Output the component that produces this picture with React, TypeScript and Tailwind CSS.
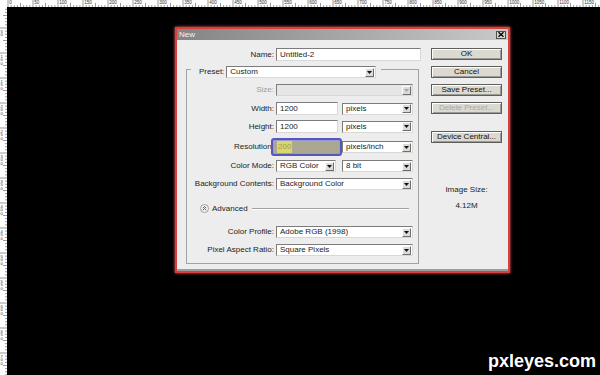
import React from "react";

function TopRuler() {
  const ticks = [];
  for (let i = 0; i * 3.125 < 593; i++) {
    const x = 1 + i * 3.125;
    const h = i % 8 === 0 ? 7 : i % 4 === 0 ? 4 : 2;
    ticks.push(<line key={i} x1={x} x2={x} y1={7 - h} y2={7} stroke="#555" strokeWidth="0.6" />);
  }
  const labels = [];
  for (let k = 0; 1 + k * 25 < 593; k++) {
    labels.push(
      <text key={k} x={2.2 + k * 25} y={4.2} fontSize="4.6" fill="#333">
        {k * 50}
      </text>
    );
  }
  return (
    <svg width="593" height="7" className="block bg-white">
      {ticks}
      {labels}
    </svg>
  );
}

function LeftRuler() {
  const ticks = [];
  for (let i = 0; -4 + i * 3.125 < 368; i++) {
    const y = -4 + i * 3.125;
    const w = i % 8 === 0 ? 7 : i % 4 === 0 ? 4 : 2;
    ticks.push(<line key={i} y1={y} y2={y} x1={7 - w} x2={7} stroke="#555" strokeWidth="0.6" />);
  }
  const labels = [];
  for (let k = 1; -4 + k * 25 < 368; k++) {
    const y = -4 + k * 25;
    const digits = String(k * 50).split("");
    labels.push(
      <text key={k} fontSize="4.2" fill="#333">
        {digits.map((d, j) => (
          <tspan key={j} x={0.6} y={y + 4.5 + j * 3.8}>
            {d}
          </tspan>
        ))}
      </text>
    );
  }
  return (
    <svg width="7" height="368" className="block bg-white">
      {ticks}
      {labels}
    </svg>
  );
}

function Arrow({ disabled }: { disabled?: boolean }) {
  return (
    <span className="mr-[1px] flex h-[9px] w-[9px] shrink-0 items-center justify-center border border-t-white border-l-white border-b-[#6e6e6e] border-r-[#6e6e6e] bg-[#dcdad3]">
      <svg width="5" height="3" viewBox="0 0 5 3">
        <path d="M0 0h5L2.5 3z" fill={disabled ? "#a8a8a8" : "#111"} />
      </svg>
    </span>
  );
}

function Select({ value, w, disabled }: { value?: string; w: string; disabled?: boolean }) {
  return (
    <div
      className={`${w} flex h-[12px] shrink-0 items-center justify-between border border-t-[#7c7c7c] border-l-[#7c7c7c] border-b-[#d8d8d8] border-r-[#d8d8d8] ${
        disabled ? "bg-[#e6e6e6]" : "bg-white"
      }`}
    >
      <span className="pl-[3px] leading-none">{value}</span>
      <Arrow disabled={disabled} />
    </div>
  );
}

function Input({ value, w }: { value: string; w: string }) {
  return (
    <div className={`${w} flex h-[13px] shrink-0 items-center border border-t-[#7c7c7c] border-l-[#7c7c7c] border-b-[#d8d8d8] border-r-[#d8d8d8] bg-white`}>
      <span className="pl-[3px] leading-none">{value}</span>
    </div>
  );
}

function Btn({ label, disabled, className }: { label: string; disabled?: boolean; className?: string }) {
  return (
    <div
      className={`flex h-[12px] w-[71px] items-center justify-center border border-[#5e5e5e] bg-[#dcd9d0] leading-none shadow-[inset_1px_1px_0_#fff,inset_-1px_-1px_0_#9c9a94] ${
        disabled ? "text-[#a9a9a9]" : "text-[#111]"
      } ${className ?? ""}`}
    >
      {label}
    </div>
  );
}

function Row({ label, className, children, muted }: { label: string; className: string; children: React.ReactNode; muted?: boolean }) {
  return (
    <div className={`flex items-center ${className}`}>
      <span className={`w-[87px] shrink-0 text-right leading-none ${muted ? "text-[#9c9c9c]" : ""}`}>{label}</span>
      {children}
    </div>
  );
}

function NewDialog() {
  return (
    <div className="absolute left-[168px] top-[20px] flex h-[246px] w-[335px] flex-col border-2 border-[#d8403e] shadow-[0_0_3px_#ff5a5a]">
      {/* title bar */}
      <div className="flex h-[11px] shrink-0 items-center justify-between bg-gradient-to-r from-[#858585] to-[#c9c9c9]">
        <span className="pl-[2px] leading-none text-[#f2f2f2]">New</span>
        <div className="mr-[2px] flex h-[8px] w-[10px] items-center justify-center border border-[#505050] bg-[#d8d5ce]">
          <svg width="6" height="5" viewBox="0 0 6 5">
            <path d="M0.5 0.3l5 4.4M5.5 0.3l-5 4.4" stroke="#000" strokeWidth="1.4" />
          </svg>
        </div>
      </div>

      <div className="flex flex-1 border-b-2 border-[#9d9d9d] bg-[#ededed] pt-[8px] text-[#1c1c1c]">
        {/* left column */}
        <div className="flex w-[254px] flex-col">
          <div className="flex h-[13px] items-center">
            <span className="w-[97px] text-right leading-none">Name:</span>
            <div className="ml-[2px]">
              <Input value="Untitled-2" w="w-[145px]" />
            </div>
          </div>

          <div className="ml-[9px] mt-[5px] flex w-[233px] flex-col">
            <div className="flex h-[12px]">
              <div className="mt-[3px] h-[9px] w-[5px] border-t border-l border-[#a2a2a2]" />
              <div className="flex items-center pl-[8px]">
                <span className="leading-none">Preset:</span>
                <div className="ml-[2px]">
                  <Select value="Custom" w="w-[150px]" />
                </div>
              </div>
              <div className="ml-[5px] mt-[3px] h-[9px] flex-1 border-t border-r border-[#a2a2a2]" />
            </div>

            <div className="flex flex-col border-x border-b border-[#a2a2a2] pb-[7px]">
              <Row label="Size:" className="mt-[6px] h-[12px]" muted>
                <div className="ml-[2px]">
                  <Select w="w-[137px]" disabled />
                </div>
              </Row>
              <Row label="Width:" className="mt-[6px] h-[13px]">
                <div className="ml-[2px] flex items-center gap-[4px]">
                  <Input value="1200" w="w-[62px]" />
                  <Select value="pixels" w="w-[71px]" />
                </div>
              </Row>
              <Row label="Height:" className="mt-[5px] h-[13px]">
                <div className="ml-[2px] flex items-center gap-[4px]">
                  <Input value="1200" w="w-[62px]" />
                  <Select value="pixels" w="w-[71px]" />
                </div>
              </Row>
              <Row label="Resolution:" className="mt-[5px] h-[18px]">
                <div className="-ml-[3px] flex items-center">
                  <div className="flex h-[18px] w-[71px] items-center rounded-[3px] border-2 border-[#5656be] bg-[#aaa891] shadow-[inset_0_0_0_1px_#9a9ad8]">
                    <span className="ml-[4px] flex h-[12px] items-center bg-[#d9d76c] px-[1px] leading-none text-[#a09c5e]">200</span>
                  </div>
                  <Select value="pixels/inch" w="w-[71px]" />
                </div>
              </Row>
              <Row label="Color Mode:" className="mt-[4px] h-[12px]">
                <div className="ml-[2px] flex items-center gap-[6px]">
                  <Select value="RGB Color" w="w-[60px]" />
                  <Select value="8 bit" w="w-[71px]" />
                </div>
              </Row>
              <Row label="Background Contents:" className="mt-[6px] h-[12px]">
                <div className="ml-[2px]">
                  <Select value="Background Color" w="w-[137px]" />
                </div>
              </Row>

              <div className="mt-[13px] flex h-[11px] items-center pl-[13px] pr-[9px]">
                <svg width="9" height="9" viewBox="0 0 9 9" className="shrink-0">
                  <circle cx="4.5" cy="4.5" r="4" fill="#f7f7f7" stroke="#8a8a8a" strokeWidth="0.8" />
                  <path d="M2.8 4.2l1.7-1.6 1.7 1.6M2.8 6.2l1.7-1.6 1.7 1.6" fill="none" stroke="#333" strokeWidth="0.8" />
                </svg>
                <span className="ml-[3px] leading-none">Advanced</span>
                <div className="ml-[4px] h-[2px] flex-1 border-t border-[#a2a2a2] bg-white" />
              </div>

              <Row label="Color Profile:" className="mt-[12px] h-[12px]">
                <div className="ml-[2px]">
                  <Select value="Adobe RGB (1998)" w="w-[137px]" />
                </div>
              </Row>
              <Row label="Pixel Aspect Ratio:" className="mt-[6px] h-[12px]">
                <div className="ml-[2px]">
                  <Select value="Square Pixels" w="w-[137px]" />
                </div>
              </Row>
            </div>
          </div>
        </div>

        {/* right column */}
        <div className="flex w-[71px] flex-col">
          <Btn label="OK" />
          <Btn label="Cancel" className="mt-[6px]" />
          <Btn label="Save Preset..." className="mt-[6px]" />
          <Btn label="Delete Preset..." disabled className="mt-[6px]" />
          <Btn label="Device Central..." className="mt-[17px]" />
          <div className="mt-[43px] text-center leading-none">Image Size:</div>
          <div className="mt-[8px] text-center leading-none">4.12M</div>
        </div>
      </div>
    </div>
  );
}

export default function App() {
  return (
    <div className="relative grid h-[375px] w-[600px] grid-cols-[7px_593px] grid-rows-[7px_368px] overflow-hidden bg-black font-['Liberation_Sans',Arial,sans-serif] text-[8px]">
      <div className="bg-white" />
      <TopRuler />
      <LeftRuler />
      <div className="relative bg-black">
        <NewDialog />
      </div>
      <span className="absolute left-[488px] top-[352px] text-[18px] font-bold leading-none text-white">pxleyes.com</span>
    </div>
  );
}
